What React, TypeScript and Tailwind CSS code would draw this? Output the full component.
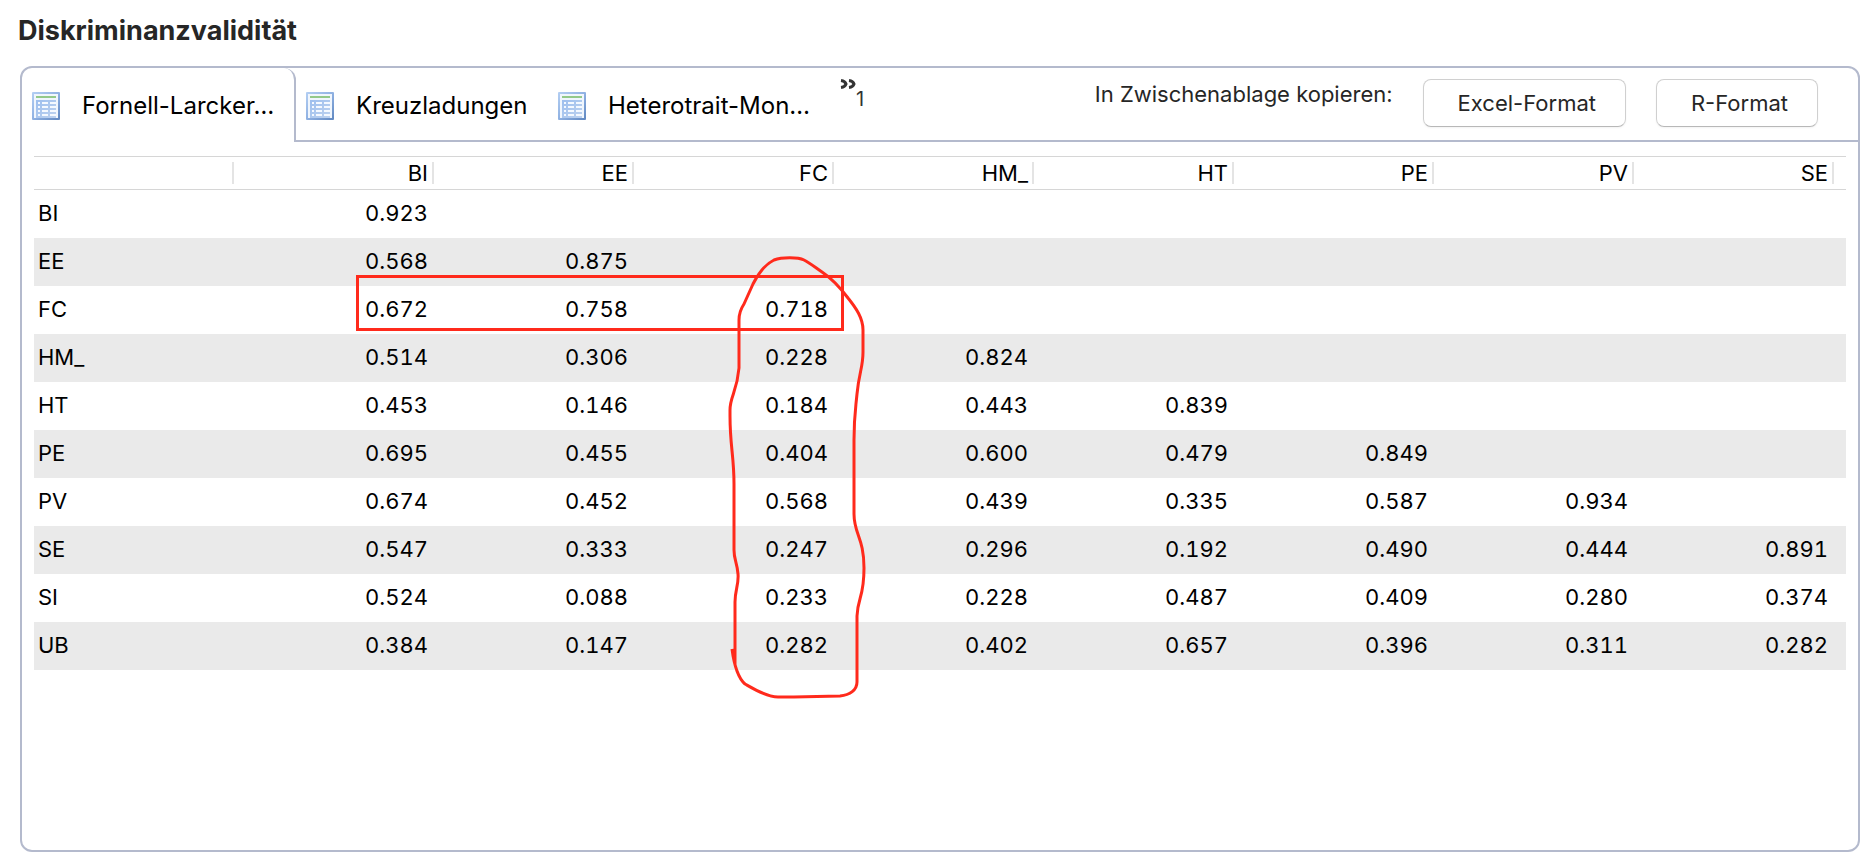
import { useState } from 'react';

const COLUMNS = ['BI', 'EE', 'FC', 'HM_', 'HT', 'PE', 'PV', 'SE'];

const ROWS = [
  { name: 'BI', values: ['0.923'] },
  { name: 'EE', values: ['0.568', '0.875'] },
  { name: 'FC', values: ['0.672', '0.758', '0.718'] },
  { name: 'HM_', values: ['0.514', '0.306', '0.228', '0.824'] },
  { name: 'HT', values: ['0.453', '0.146', '0.184', '0.443', '0.839'] },
  { name: 'PE', values: ['0.695', '0.455', '0.404', '0.600', '0.479', '0.849'] },
  { name: 'PV', values: ['0.674', '0.452', '0.568', '0.439', '0.335', '0.587', '0.934'] },
  { name: 'SE', values: ['0.547', '0.333', '0.247', '0.296', '0.192', '0.490', '0.444', '0.891'] },
  { name: 'SI', values: ['0.524', '0.088', '0.233', '0.228', '0.487', '0.409', '0.280', '0.374'] },
  { name: 'UB', values: ['0.384', '0.147', '0.282', '0.402', '0.657', '0.396', '0.311', '0.282'] },
];

const TABS = [
  { label: 'Fornell-Larcker…', width: 'min-w-[274px]' },
  { label: 'Kreuzladungen', width: 'min-w-[252px]' },
  { label: 'Heterotrait-Mon…', width: 'min-w-[292px]' },
];

function TableIcon() {
  return (
    <svg viewBox="0 0 28 28" className="w-7 h-7 shrink-0" aria-hidden="true">
      <defs>
        <linearGradient id="frame" x1="0" y1="0" x2="1" y2="1">
          <stop offset="0" stopColor="#b4cff3" />
          <stop offset="0.5" stopColor="#8fb1e2" />
          <stop offset="1" stopColor="#5f87c0" />
        </linearGradient>
        <linearGradient id="cells" x1="0" y1="0" x2="1" y2="1">
          <stop offset="0" stopColor="#9dbfee" />
          <stop offset="1" stopColor="#bdd2ef" />
        </linearGradient>
      </defs>
      <rect width="28" height="28" rx="1" fill="url(#frame)" />
      <rect x="2" y="2" width="24" height="24" fill="#f0f6fd" />
      <rect x="4" y="4" width="20" height="2" fill="#93c98a" />
      <rect x="4" y="8" width="20" height="18" fill="url(#cells)" />
      <path
        d="M6 11h2M10 11h6M18 11h6M6 15h2M10 15h6M18 15h6M6 19h2M10 19h6M18 19h6M6 23h2M10 23h6M18 23h6"
        stroke="#f4f9ff"
        strokeWidth="2"
      />
    </svg>
  );
}

// Red pen marks over the FC row and the FC column
function Annotations() {
  return (
    <svg
      viewBox="0 0 600 560"
      className="absolute top-0 left-[300px] w-[600px] h-[560px] pointer-events-none"
      fill="none"
      stroke="#ff2a1c"
      strokeWidth="3"
      aria-hidden="true"
    >
      <rect x="23.5" y="120.5" width="485" height="53" />
      <path
        strokeLinejoin="round"
        d="M401 509V446C401 434 405 428 404 418C403 406 400 404 400 394V328C400 300 396 290 396 260V254C396 240 403 236 405 212V164C405 158 406 154 410 148L419 128C424 118 432 108 440 104C448 101 464 101 470 104C476 107 482 112 488 116C500 124 508 134 514 142C522 152 529 162 529 174V196C529 212 525 216 523 238C521 258 520 262 520 284V358C520 378 530 382 530 412C530 442 524 440 523 460V526C523 534 516 539 506 540L460 541H444C432 541 418 532 411 528C403 521 400 508 398 493"
      />
    </svg>
  );
}

export default function App() {
  const [activeTab, setActiveTab] = useState(0);

  return (
    <main className="flex min-h-screen flex-col bg-white pr-4 pb-0.5 pl-5 font-['Inter',sans-serif] text-[22px] text-black">
      <h1 className="-ml-0.5 h-[66px] pt-[15px] text-[27px] leading-8 font-bold text-[#262626]">Diskriminanzvalidität</h1>

      <section className="flex-1 rounded-xl border-2 border-[#b4bacd]">
        <header className="flex">
          <div role="tablist" className="flex text-2xl">
            {TABS.map((tab, index) => (
              <button
                key={tab.label}
                type="button"
                role="tab"
                aria-selected={activeTab === index}
                onClick={() => setActiveTab(index)}
                className={`flex h-[74px] items-center gap-[22px] border-[#b4bacd] pt-1 pl-2.5 whitespace-nowrap ${tab.width} ${
                  activeTab === index ? 'rounded-tr-xl border-r-2 pb-0.5' : 'border-b-2'
                }`}
              >
                <TableIcon />
                {tab.label}
              </button>
            ))}
          </div>

          <div className="flex flex-1 items-start justify-end border-b-2 border-[#b4bacd] pt-[11px] pr-10">
            <button type="button" aria-label="1" className="mr-auto flex text-[#333333]">
              <svg viewBox="0 0 16 10" className="w-4 h-2.5" fill="none" stroke="currentColor" strokeWidth="3" aria-hidden="true">
                <path d="M1 1.5Q5 2 6 5Q5 8 1 8.5M9 1.5Q13 2 14 5Q13 8 9 8.5" />
              </svg>
              <span className="mt-1.5 text-xl">1</span>
            </button>
            <span className="mr-[30px] leading-[30px] text-[#262626]">In Zwischenablage kopieren:</span>
            <div className="flex gap-[30px] text-[#262626]">
              <button type="button" className="h-12 rounded-lg border border-[#d0d0d0] border-b-[#b8b8b8] pr-[29px] pl-[34px] shadow-xs">
                Excel-Format
              </button>
              <button type="button" className="h-12 rounded-lg border border-[#d0d0d0] border-b-[#b8b8b8] pr-[29px] pl-[34px] shadow-xs">
                R-Format
              </button>
            </div>
          </div>
        </header>

        <div className="relative mx-3 mt-3.5">
          <table className="w-full table-fixed border-separate border-spacing-0">
            <colgroup>
              <col className="w-[200px]" />
              {COLUMNS.map((column) => (
                <col key={column} className="w-[200px]" />
              ))}
              <col />
            </colgroup>
            <thead>
              <tr>
                {['', ...COLUMNS].map((column, index) => (
                  <th key={index} scope="col" className="h-[34px] border-y border-[#d6d6d6] p-0 font-normal">
                    <div className="h-[22px] border-r-2 border-[#e4e4e4] pr-1 text-right leading-[22px]">{column}</div>
                  </th>
                ))}
                <td className="border-y border-[#d6d6d6] p-0" />
              </tr>
            </thead>
            <tbody>
              {ROWS.map((row) => (
                <tr key={row.name} className="even:bg-[#eaeaea]">
                  <th scope="row" className="h-12 pt-0 pr-0 pb-0.5 pl-1 text-left font-normal">
                    {row.name}
                  </th>
                  {COLUMNS.map((column, index) => (
                    <td key={column} className="pt-0 pr-1.5 pb-0.5 pl-0 text-right tabular-nums">
                      {row.values[index]}
                    </td>
                  ))}
                  <td className="p-0" />
                </tr>
              ))}
            </tbody>
          </table>
          <Annotations />
        </div>
      </section>
    </main>
  );
}
